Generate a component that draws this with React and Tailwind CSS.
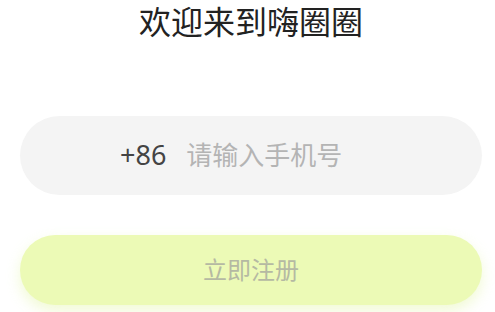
import React, { useState } from 'react';

const font = { fontFamily: '"Noto Sans", "Noto Sans CJK SC", sans-serif' };

const App = () => {
    const [phone, setPhone] = useState('');

    return (
        <div className="min-h-screen bg-white pl-[20px] pr-[13px]" style={font}>
            <h1 className="text-center text-[32px] leading-[44px] text-[#222] font-normal">
                欢迎来到嗨圈圈
            </h1>

            <div className="mt-[72px] h-[79px] rounded-full bg-[#f4f4f4] flex items-center pl-[100px] pr-6">
                <span className="text-[27px] text-[#444] mr-[20px]">+86</span>
                <input
                    value={phone}
                    onChange={e => setPhone(e.target.value)}
                    placeholder="请输入手机号"
                    className="flex-1 min-w-0 bg-transparent outline-none text-[26px] text-[#333] placeholder:text-[#b4b4b4]"
                />
            </div>

            <button
                disabled={!phone}
                className="mt-[40px] w-full h-[70px] rounded-full bg-[#ecfab6] text-[24px] text-[#b5b9a3] shadow-[0_6px_14px_rgba(225,245,160,0.45)]"
            >
                立即注册
            </button>
        </div>
    );
};

export default App;
